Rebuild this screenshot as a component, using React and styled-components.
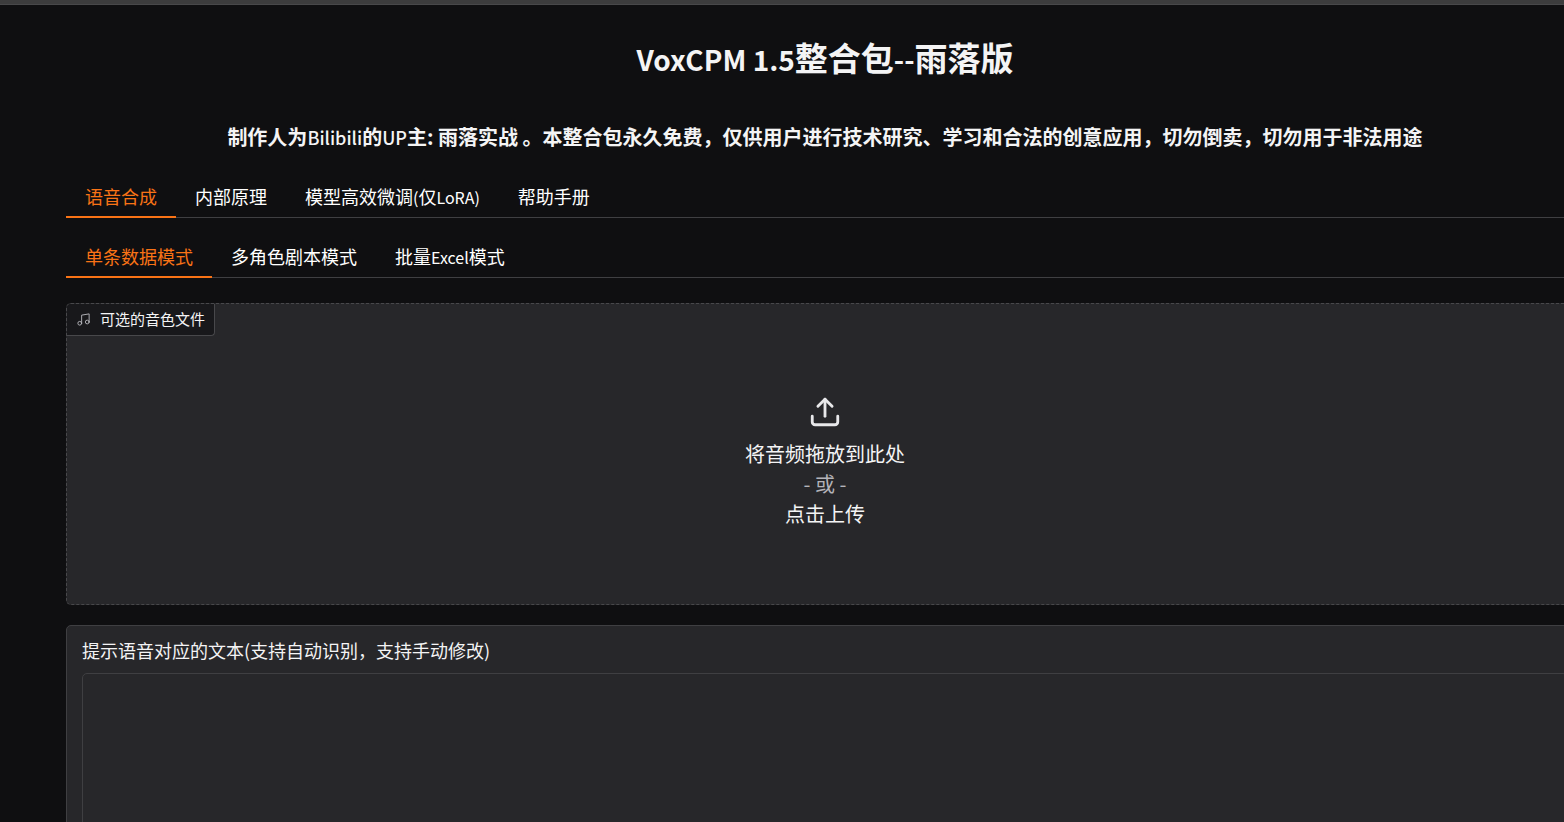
import React from "react";
import styled, { createGlobalStyle } from "styled-components";

const MAIN_TABS = ["语音合成", "内部原理", "模型高效微调(仅LoRA)", "帮助手册"];
const MODE_TABS = ["单条数据模式", "多角色剧本模式", "批量Excel模式"];

// latin runs sit a little smaller than the chinese around them
const MixedText = ({ text, size, weight }) =>
  text.split(/([A-Za-z0-9.()-]+(?: [A-Za-z0-9.]+)*)/).map((part, i) =>
    i % 2 ? (
      <Latin key={i} $size={size} $weight={weight}>
        {part}
      </Latin>
    ) : (
      part
    )
  );

const Tabs = ({ items, label }) => {
  const [active, setActive] = React.useState(0);

  return (
    <TabList role="tablist" aria-label={label}>
      {items.map((item, i) => (
        <Tab
          key={item}
          type="button"
          role="tab"
          aria-selected={i === active}
          $active={i === active}
          onClick={() => setActive(i)}>
          <MixedText text={item} size={16} weight={400} />
        </Tab>
      ))}
    </TabList>
  );
};

const AudioUpload = () => {
  const inputRef = React.useRef(null);

  return (
    <AudioBlock>
      <BlockLabel htmlFor="audio-file">
        <MusicIcon viewBox="0 0 24 24">
          <path d="M9 18V5l12-2v13" />
          <circle cx="6" cy="18" r="3" />
          <circle cx="18" cy="16" r="3" />
        </MusicIcon>
        可选的音色文件
      </BlockLabel>
      <input
        ref={inputRef}
        id="audio-file"
        type="file"
        accept="audio/*"
        hidden
      />
      <DropArea type="button" onClick={() => inputRef.current.click()}>
        <UploadIcon viewBox="0 0 24 24">
          <path d="M21 15v4a2 2 0 0 1-2 2H5a2 2 0 0 1-2-2v-4" />
          <polyline points="17 8 12 3 7 8" />
          <line x1="12" y1="3" x2="12" y2="15" />
        </UploadIcon>
        <span>将音频拖放到此处</span>
        <Or>- 或 -</Or>
        <span>点击上传</span>
      </DropArea>
    </AudioBlock>
  );
};

const App = () => {
  return (
    <Page>
      <GlobalStyle />
      <TopBar />
      <Content>
        <Title>
          <MixedText text="VoxCPM 1.5整合包--雨落版" size={28} weight={700} />
        </Title>
        <Notice>
          <MixedText
            text="制作人为Bilibili的UP主: 雨落实战 。本整合包永久免费，仅供用户进行技术研究、学习和合法的创意应用，切勿倒卖，切勿用于非法用途"
            size={18}
            weight={500}
          />
        </Notice>
        <Tabs items={MAIN_TABS} label="功能" />
        <Tabs items={MODE_TABS} label="模式" />
        <AudioUpload />
        <TextBlock>
          <FieldLabel htmlFor="prompt-text">
            提示语音对应的文本(支持自动识别，支持手动修改)
          </FieldLabel>
          <TextArea id="prompt-text" />
        </TextBlock>
      </Content>
    </Page>
  );
};

const GlobalStyle = createGlobalStyle`
  * {
    box-sizing: border-box;
  }

  body {
    margin: 0;
    background: #0f0f11;
    color: #f4f4f5;
    font-family: "Noto Sans CJK SC", sans-serif;
  }

  button,
  textarea {
    font-family: inherit;
  }
`;

const Page = styled.div`
  height: 100vh;
  overflow: hidden;
`;

const TopBar = styled.div`
  height: 5px;
  background: #3c3c3d;
  border-bottom: 1px solid #48484a;
`;

// the right edge of the content runs past the window
const Content = styled.main`
  display: flex;
  flex-direction: column;
  margin-left: 66px;
  margin-right: -20px;
`;

const Latin = styled.span`
  font-size: ${(props) => props.$size}px;
  line-height: 1;
  font-weight: ${(props) => props.$weight};
`;

const Title = styled.h1`
  margin: 28px 0 0;
  font-size: 33px;
  line-height: 48px;
  font-weight: 700;
  text-align: center;
`;

const Notice = styled.h3`
  margin: 41px 0 24px;
  font-size: 20px;
  line-height: 30px;
  font-weight: 700;
  text-align: center;
`;

const TabList = styled.div`
  display: flex;
  height: 42px;
  margin-bottom: 18px;
  border-bottom: 1px solid #3f3f42;
`;

const Tab = styled.button`
  height: 42px;
  padding: 0 19px 1px;
  border: 0;
  border-bottom: 2px solid
    ${(props) => (props.$active ? "#f97316" : "transparent")};
  background: none;
  color: ${(props) => (props.$active ? "#f97316" : "#ffffff")};
  font-size: 18px;
  line-height: 24px;
  white-space: nowrap;
  cursor: pointer;
`;

const AudioBlock = styled.section`
  display: flex;
  flex-direction: column;
  align-items: flex-start;
  height: 302px;
  margin-top: 7px;
  border: 1px dashed #48484b;
  border-radius: 5px;
  background: #27272a;
`;

const BlockLabel = styled.label`
  display: flex;
  align-items: center;
  gap: 9px;
  height: 32px;
  padding: 0 9px 1px;
  border: solid #48484b;
  border-width: 0 1px 1px 0;
  border-radius: 4px 0 4px 0;
  background: #18181b;
  font-size: 15px;
  line-height: 20px;
`;

const DropArea = styled.button`
  display: flex;
  flex: 1;
  flex-direction: column;
  align-items: center;
  align-self: stretch;
  justify-content: center;
  padding: 0 0 17px;
  border: 0;
  background: none;
  color: #f4f4f5;
  font-size: 20px;
  line-height: 30px;
  cursor: pointer;
`;

const Or = styled.span`
  color: #b4b4ba;
`;

const Icon = styled.svg`
  flex: none;
  fill: none;
  stroke-linecap: round;
  stroke-linejoin: round;
`;

const MusicIcon = styled(Icon)`
  width: 15px;
  height: 15px;
  stroke: #b4b4ba;
  stroke-width: 1.5;
`;

const UploadIcon = styled(Icon)`
  width: 34px;
  height: 34px;
  margin-bottom: 10px;
  stroke: #e8e8ea;
  stroke-width: 2;
`;

const TextBlock = styled.section`
  display: flex;
  flex-direction: column;
  margin-top: 20px;
  padding: 12px 15px;
  border: 1px solid #3f3f42;
  border-radius: 5px;
  background: #27272a;
`;

const FieldLabel = styled.label`
  margin-bottom: 10px;
  font-size: 18px;
  line-height: 25px;
`;

const TextArea = styled.textarea`
  height: 240px;
  padding: 12px;
  border: 1px solid #3f3f42;
  border-radius: 5px;
  outline: none;
  background: #27272a;
  color: #f4f4f5;
  font-size: 18px;
  resize: none;
`;

export default App;
